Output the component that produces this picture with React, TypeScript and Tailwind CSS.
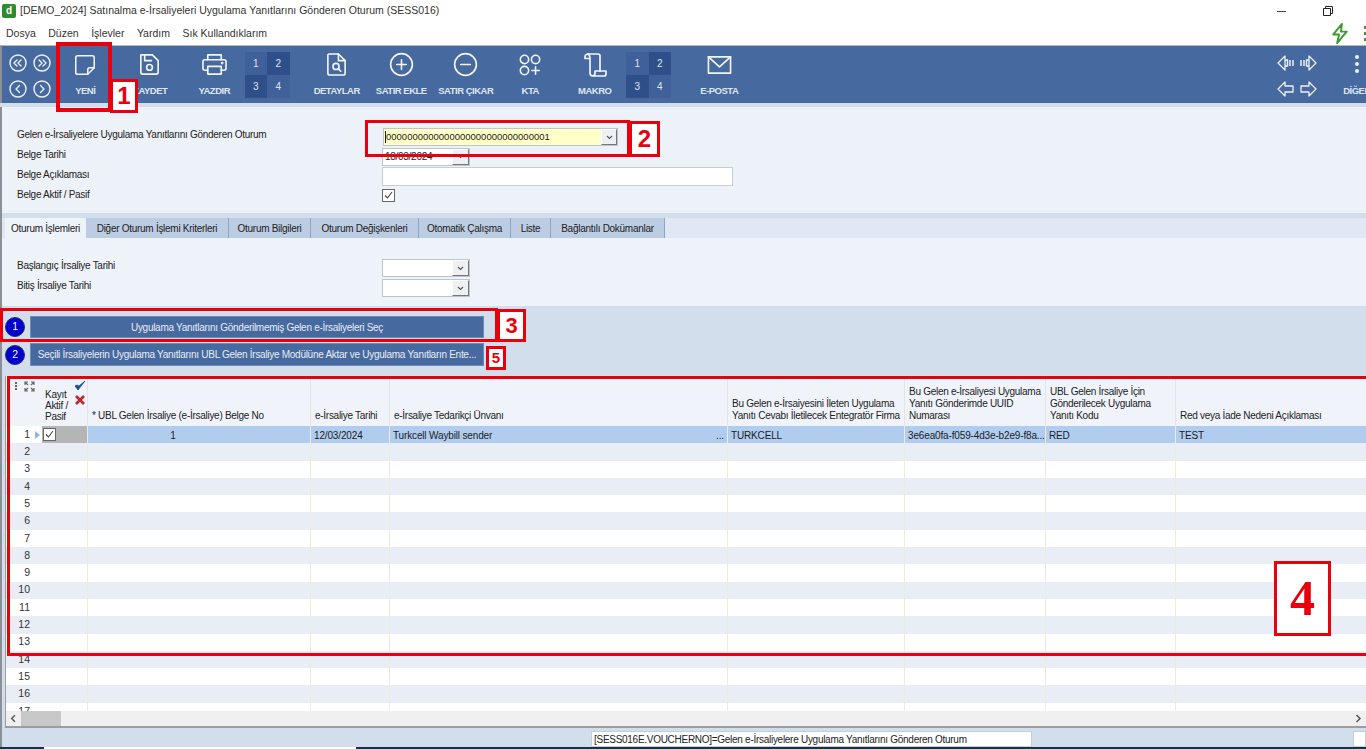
import React from "react";

const stroke = { fill: "none", stroke: "#f2f5fa", strokeWidth: 1.7, strokeLinecap: "round" as const, strokeLinejoin: "round" as const };

function NewIcon() {
  return (
    <svg width="24" height="24" viewBox="0 0 26 26" {...stroke}>
      <path d="M5 3h16a2 2 0 0 1 2 2v11l-7 7H5a2 2 0 0 1-2-2V5a2 2 0 0 1 2-2z" />
      <path d="M23 16h-5a2 2 0 0 0-2 2v5" />
    </svg>
  );
}
function SaveIcon() {
  return (
    <svg width="25" height="25" viewBox="0 0 26 26" {...stroke}>
      <path d="M4 3h12l6 6v12a2 2 0 0 1-2 2H6a2 2 0 0 1-2-2z" />
      <path d="M8 3v6h7" />
      <circle cx="13" cy="16" r="3" />
    </svg>
  );
}
function PrintIcon() {
  return (
    <svg width="27" height="25" viewBox="0 0 28 26" {...stroke}>
      <path d="M7 8V3h14v5" />
      <path d="M7 19H4a2 2 0 0 1-2-2v-7a2 2 0 0 1 2-2h20a2 2 0 0 1 2 2v7a2 2 0 0 1-2 2h-3" />
      <path d="M7 15h14v8H7z" />
      <circle cx="22" cy="11.500" r="0.6" />
    </svg>
  );
}
function DetailIcon() {
  return (
    <svg width="23" height="25" viewBox="0 0 24 26" {...stroke}>
      <path d="M4 2h10l7 7v13a2 2 0 0 1-2 2H5a2 2 0 0 1-2-2V3z" />
      <path d="M14 2v7h7" />
      <circle cx="11.500" cy="15" r="3.200" />
      <path d="M14 17.500l2.500 2.500" />
    </svg>
  );
}
function PlusIcon() {
  return (
    <svg width="25" height="25" viewBox="0 0 26 26" {...stroke}>
      <circle cx="13" cy="13" r="11.300" />
      <path d="M13 8v10M8 13h10" />
    </svg>
  );
}
function MinusIcon() {
  return (
    <svg width="25" height="25" viewBox="0 0 26 26" {...stroke}>
      <circle cx="13" cy="13" r="11.300" />
      <path d="M8 13h10" />
    </svg>
  );
}
function KtaIcon() {
  return (
    <svg width="24" height="24" viewBox="0 0 26 26" {...stroke}>
      <circle cx="7" cy="7" r="4.500" />
      <circle cx="19" cy="7" r="4.500" />
      <circle cx="7" cy="19" r="4.500" />
      <path d="M19 15v8M15 19h8" />
    </svg>
  );
}
function MacroIcon() {
  return (
    <svg width="26" height="26" viewBox="0 0 26 26" {...stroke}>
      <path d="M6 2h10a2 2 0 0 1 2 2v15" />
      <path d="M6 2a3 3 0 0 0-3 3v1.500h4.500" />
      <path d="M6 2c1.500 1 2 2 2 4v15a3 3 0 0 0 3 3h11a2 2 0 0 0 2-2v-3H13v2a3 3 0 0 1-2 3" />
    </svg>
  );
}
function MailIcon() {
  return (
    <svg width="25" height="20" viewBox="0 0 26 20" {...stroke}>
      <path d="M1.500 1.500h23v17h-23z" />
      <path d="M1.500 1.500L13 12 24.500 1.500" />
    </svg>
  );
}

function NavCircle({ dir }: { dir: "ll" | "rr" | "l" | "r" }) {
  const d = { ll: "M8 6L5 9l3 3M12 6L9 9l3 3", rr: "M6 6l3 3-3 3M10 6l3 3-3 3", l: "M10.500 5.500L7 9l3.500 3.500", r: "M7.500 5.500L11 9l-3.500 3.500" }[dir];
  return (
    <svg width="18" height="18" viewBox="0 0 18 18" fill="none" stroke="#eef2f8" strokeWidth="1.400" strokeLinecap="round" strokeLinejoin="round">
      <circle cx="9" cy="9" r="8" />
      <path d={d} />
    </svg>
  );
}

function ArrowIcon({ dir, bars }: { dir: "l" | "r"; bars?: boolean }) {
  const p = "M9 2L2 9l7 7v-4h8V6H9z";
  return (
    <svg width="20" height="18" viewBox="0 0 20 18" fill="none" stroke="#eef2f8" strokeWidth="1.300" strokeLinejoin="round" className={dir === "r" ? "-scale-x-100" : ""}>
      {bars ? <path d="M9 2L2 9l7 7z" /> : <path d={p} />}
      {bars && <path d="M9 6h2.500v6H9M14 6v6M17 6v6" strokeWidth="1.500" />}
    </svg>
  );
}

function Tool({ label, icon }: { label: string; icon: React.ReactNode }) {
  return (
    <div className="w-[64.500px] shrink-0 flex flex-col items-center">
      <div className="h-[37px] flex items-center justify-center">{icon}</div>
      <div className="mt-[2px] text-[9.500px] tracking-[-0.5px] leading-[12px] font-bold text-[#dfe6f1] whitespace-nowrap">{label}</div>
    </div>
  );
}

function NumGrid({ shift }: { shift: string }) {
  const cells = [
    { n: "1", c: "bg-[#3f6099]" },
    { n: "2", c: "bg-[#2f4f8b]" },
    { n: "3", c: "bg-[#2f4f8b]" },
    { n: "4", c: "bg-[#3f6099]" },
  ];
  return (
    <div className={`grid grid-cols-2 w-[45px] h-[46px] shrink-0 mt-[6px] ${shift}`}>
      {cells.map((x) => (
        <div key={x.n} className={`${x.c} flex items-center justify-center text-[10px] text-[#dfe6f1]`}>
          {x.n}
        </div>
      ))}
    </div>
  );
}

function Chevron() {
  return (
    <svg width="7" height="5" viewBox="0 0 7 5" fill="none" stroke="#555" strokeWidth="1.100">
      <path d="M1 1l2.500 2.500L6 1" />
    </svg>
  );
}

function DropBtn({ w = "w-[17px]" }: { w?: string }) {
  return (
    <div className={`${w} h-full shrink-0 flex items-center justify-center bg-[#eef0f4] border border-t-[#fff] border-l-[#fff] border-r-[#777] border-b-[#777]`}>
      <Chevron />
    </div>
  );
}

function Check({ size = "w-[13px] h-[13px]" }: { size?: string }) {
  return (
    <div className={`${size} bg-white border border-[#666] flex items-center justify-center`}>
      <svg width="11" height="11" viewBox="0 0 11 11" fill="none" stroke="#444" strokeWidth="1.100">
        <path d="M2 5.500l2.500 2.500L9 2" />
      </svg>
    </div>
  );
}

const cols = [
  { w: "w-[36px]" },
  { w: "w-[46px]" },
  { w: "w-[223px]" },
  { w: "w-[79px]" },
  { w: "w-[338px]" },
  { w: "w-[177px]" },
  { w: "w-[141px]" },
  { w: "w-[130px]" },
  { w: "w-[191px]" },
];

const heads = [
  "* UBL Gelen İrsaliye (e-İrsaliye) Belge No",
  "e-İrsaliye Tarihi",
  "e-İrsaliye Tedarikçi Ünvanı",
  "Bu Gelen e-İrsaiyesini İleten Uygulama\nYanıtı Cevabı İletilecek Entegratör Firma",
  "Bu Gelen e-İrsaliyesi Uygulama\nYanıtı Gönderimde UUID\nNumarası",
  "UBL Gelen İrsaliye İçin\nGönderilecek Uygulama\nYanıtı Kodu",
  "Red veya İade Nedeni Açıklaması",
];

function Row({ n }: { n: number }) {
  const sel = n === 1;
  const bg = sel ? "bg-[#b0cdf0]" : n % 2 === 0 ? "bg-[#e9eef6]" : "bg-white";
  const cell = "h-full shrink-0 border-r border-[#ecebdc] flex items-center pt-px pl-[3px] text-[10px] tracking-[-0.15px] text-[#1c1c1c] whitespace-nowrap overflow-hidden";
  const values = sel
    ? ["1", "12/03/2024", "Turkcell Waybill sender", "TURKCELL", "3e6ea0fa-f059-4d3e-b2e9-f8a...", "RED", "TEST"]
    : ["", "", "", "", "", "", ""];
  return (
    <div className="flex h-[17.300px] shrink-0">
      <div className={`${cols[0].w} ${n % 2 === 0 ? "bg-[#e9eef6]" : "bg-white"} h-full shrink-0 flex items-center relative`}>
        <span className="w-[24px] text-right text-[10.500px] tracking-normal text-[#333]">{n}</span>
        {sel && <span className="ml-[5px] w-0 h-0 border-y-[4px] border-y-transparent border-l-[5px] border-l-[#8fb4e4]" />}
      </div>
      <div className={`${cols[1].w} ${sel ? "bg-[#b5b5b5]" : bg} h-full shrink-0 border-r border-[#ecebdc] pl-[1px] flex items-center`}>
        {sel && <Check />}
      </div>
      {values.map((v, i) => (
        <div key={i} className={`${cols[i + 2].w} ${bg} ${cell} ${i === 0 ? "justify-center pr-[55px]" : "pr-[3px]"} ${i === 2 ? "justify-between" : ""}`}>
          <span>{v}</span>
          {sel && i === 2 && <span>...</span>}
        </div>
      ))}
      <div className={`flex-1 ${bg}`} />
    </div>
  );
}

function Badge({ n, className }: { n: string; className: string }) {
  return (
    <div className={`absolute bg-white border-[3px] border-[#e8000d] text-[#e8000d] font-bold tracking-normal flex items-center justify-center ${className}`}>
      {n}
    </div>
  );
}

export default function App() {
  const font = { fontFamily: '"Liberation Sans", Arial, sans-serif' };
  return (
    <div className="relative w-[1366px] h-[749px] overflow-hidden bg-[#d3deed] flex flex-col text-[10px] tracking-[-0.28px] text-[#222]" style={font}>
      {/* title bar */}
      <div className="h-[22px] shrink-0 bg-white flex items-center pl-[2px] pr-0">
        <div className="w-[14px] h-[14px] rounded-[2px] bg-[#2e8b2e] text-white text-[10px] font-bold flex items-center justify-center leading-none">d</div>
        <span className="ml-[4px] text-[10.500px] tracking-normal text-[#333] whitespace-nowrap">[DEMO_2024] Satınalma e-İrsaliyeleri Uygulama Yanıtlarını Gönderen Oturum (SESS016)</span>
        <div className="ml-auto flex items-center">
          <div className="w-[9px] h-px bg-[#444] mr-[37px]" />
          <svg width="10" height="10" viewBox="0 0 10 10" fill="none" stroke="#222" strokeWidth="1" className="mr-[33px]">
            <path d="M0.500 2.500h7v7h-7zM2.500 2.500v-2h7v7h-2" />
          </svg>
        </div>
      </div>
      {/* menu */}
      <div className="h-[23px] shrink-0 bg-white flex items-center pl-[6px] gap-[12.500px] text-[10.500px] tracking-normal text-[#333] relative">
        <span>Dosya</span>
        <span>Düzen</span>
        <span>İşlevler</span>
        <span>Yardım</span>
        <span>Sık Kullandıklarım</span>
        <div className="ml-auto flex items-center pr-0">
          <svg width="20" height="23" viewBox="0 0 20 24" fill="none" stroke="#3f9a2d" strokeWidth="2" strokeLinejoin="round" className="mr-[14px]">
            <path d="M12 2L3 13h6l-2 9 10-12h-6z" />
          </svg>
          <div className="w-[2px] flex flex-col gap-[3px]">
            <span className="w-[3px] h-[3px] bg-[#3f9a2d]" />
            <span className="w-[3px] h-[3px] bg-[#3f9a2d]" />
            <span className="w-[3px] h-[3px] bg-[#3f9a2d]" />
          </div>
        </div>
      </div>
      {/* toolbar */}
      <div className="h-[58px] shrink-0 bg-[#46699f] border-t border-[#b9b9b9] border-l-2 border-l-[#8b8f96] flex items-start pl-[6px] overflow-hidden">
        <div className="w-[45px] shrink-0 grid grid-cols-2 gap-x-[3px] gap-y-[8px] pt-[8px] pl-[1px]">
          <NavCircle dir="ll" />
          <NavCircle dir="rr" />
          <NavCircle dir="l" />
          <NavCircle dir="r" />
        </div>
        <Tool label="YENİ" icon={<NewIcon />} />
        <Tool label="KAYDET" icon={<SaveIcon />} />
        <Tool label="YAZDIR" icon={<PrintIcon />} />
        <NumGrid shift="ml-[-2px]" />
        <div className="w-[15px] shrink-0" />
        <Tool label="DETAYLAR" icon={<DetailIcon />} />
        <Tool label="SATIR EKLE" icon={<PlusIcon />} />
        <Tool label="SATIR ÇIKAR" icon={<MinusIcon />} />
        <Tool label="KTA" icon={<KtaIcon />} />
        <Tool label="MAKRO" icon={<MacroIcon />} />
        <NumGrid shift="ml-[-1px]" />
        <div className="w-[16px] shrink-0" />
        <Tool label="E-POSTA" icon={<MailIcon />} />
        <div className="ml-auto flex items-start">
          <div className="grid grid-cols-2 gap-x-[2px] gap-y-[8px] pt-[8px]">
            <ArrowIcon dir="l" bars />
            <ArrowIcon dir="r" bars />
            <ArrowIcon dir="l" />
            <ArrowIcon dir="r" />
          </div>
          <div className="w-[28px] ml-[25px] mr-[-5px] shrink-0 flex flex-col items-center">
            <div className="h-[35px] flex flex-col items-center justify-center gap-[3px]">
              <span className="w-[4px] h-[4px] rounded-full bg-[#eef2f8]" />
              <span className="w-[4px] h-[4px] rounded-full bg-[#eef2f8]" />
              <span className="w-[4px] h-[4px] rounded-full bg-[#eef2f8]" />
            </div>
            <div className="mt-[4px] text-[9.500px] tracking-[-0.5px] leading-[12px] font-bold text-[#dfe6f1]">DİĞER</div>
          </div>
        </div>
      </div>
      <div className="h-[4px] shrink-0 bg-[#d3deed]" />
      {/* content column */}
      <div className="flex-1 min-h-0 flex flex-col border-l-2 border-[#8b8f96]">
        {/* header form */}
        <div className="h-[106px] shrink-0 bg-[#edf1f8] pt-[17px] pl-[15px] flex flex-col">
          <div className="flex items-center h-[20px]">
            <span className="w-[365px] shrink-0 whitespace-nowrap">Gelen e-İrsaliyelere Uygulama Yanıtlarını Gönderen Oturum</span>
            <div className="w-[235px] h-[18px] mt-[6px] bg-[#ffffc8] border border-[#bfc5cf] flex items-center pl-[1px] ml-[1px] justify-between">
              <span className="text-[9.500px] tracking-normal text-[#222] border-l border-[#222] leading-[12px]">0000000000000000000000000000001</span>
              <DropBtn w="w-[16px]" />
            </div>
          </div>
          <div className="flex items-center h-[20px]">
            <span className="w-[365px] shrink-0">Belge Tarihi</span>
            <div className="w-[88px] h-[18px] mt-[5px] bg-white border border-[#bfc5cf] flex items-center pl-[2px] justify-between">
              <span>18/03/2024</span>
              <DropBtn />
            </div>
          </div>
          <div className="flex items-center h-[20px]">
            <span className="w-[365px] shrink-0">Belge Açıklaması</span>
            <div className="w-[351px] h-[19px] mt-[5px] bg-white border border-[#c8ccd4]" />
          </div>
          <div className="flex items-center h-[20px]">
            <span className="w-[365px] shrink-0">Belge Aktif / Pasif</span>
            <div className="mt-[3px]"><Check /></div>
          </div>
        </div>
        <div className="h-[5px] shrink-0 bg-[#d3deed]" />
        {/* tabs */}
        <div className="h-[20px] shrink-0 pl-[3px] flex bg-[#e1e8f3] items-stretch whitespace-nowrap">
          <div className="w-[81px] bg-[#eef2f9] flex items-center justify-center">Oturum İşlemleri</div>
          {[
            ["w-[143px]", "Diğer Oturum İşlemi Kriterleri"],
            ["w-[82px]", "Oturum Bilgileri"],
            ["w-[108px]", "Oturum Değişkenleri"],
            ["w-[92px]", "Otomatik Çalışma"],
            ["w-[40px]", "Liste"],
            ["w-[114px]", "Bağlantılı Dokümanlar"],
          ].map(([w, t]) => (
            <div key={t} className={`${w} bg-[#bccde3] border-r border-[#8ea6c5] flex items-center justify-center`}>
              {t}
            </div>
          ))}
        </div>
        {/* tab body */}
        <div className="h-[68px] shrink-0 bg-[#eef2f9] pt-[17px] pl-[15px] flex flex-col">
          <div className="flex items-center h-[20px]">
            <span className="w-[365px] shrink-0">Başlangıç İrsaliye Tarihi</span>
            <div className="w-[88px] h-[18px] mt-[6px] bg-white border border-[#bfc5cf] flex justify-end"><DropBtn /></div>
          </div>
          <div className="flex items-center h-[20px]">
            <span className="w-[365px] shrink-0">Bitiş İrsaliye Tarihi</span>
            <div className="w-[88px] h-[18px] mt-[6px] bg-white border border-[#bfc5cf] flex justify-end"><DropBtn /></div>
          </div>
        </div>
        {/* action buttons */}
        <div className="h-[70px] shrink-0 pt-[10px] pl-[3px] flex flex-col gap-[5px]">
          {[
            ["1", "Uygulama Yanıtlarını Gönderilmemiş Gelen e-İrsaliyeleri Seç", "h-[22px]"],
            ["2", "Seçili İrsaliyelerin Uygulama Yanıtlarını UBL Gelen İrsaliye Modülüne Aktar ve Uygulama Yanıtların Ente...", "h-[23px]"],
          ].map(([n, t, h]) => (
            <div key={n} className={`flex items-center ${h}`}>
              <div className="w-[20px] h-[20px] rounded-full bg-[#0000cc] border border-[#2b2b7a] text-white text-[10.500px] flex items-center justify-center shrink-0">{n}</div>
              <div className="ml-[5px] w-[454px] h-full bg-[#46699f] text-[#e8edf5] flex items-center justify-center whitespace-nowrap overflow-hidden border border-[#6f8cb8]">{t}</div>
            </div>
          ))}
        </div>
        {/* data grid */}
        <div className="ml-[3px] h-[352px] shrink-0 bg-white border-b-2 border-l border-[#9a9da3] flex flex-col overflow-hidden">
          <div className="h-[48px] shrink-0 flex bg-[#f0f4fa] mt-[2px]">
            <div className={`${cols[0].w} shrink-0 flex items-start gap-[7px] pl-[9px] pt-[3px]`}>
              <div className="flex flex-col gap-[1px] mt-[1px]">
                <span className="w-[2px] h-[2px] bg-[#666]" />
                <span className="w-[2px] h-[2px] bg-[#666]" />
                <span className="w-[2px] h-[2px] bg-[#666]" />
              </div>
              <svg width="11" height="11" viewBox="0 0 11 11" fill="none" stroke="#666" strokeWidth="1.200">
                <path d="M1 4V1h3M7 1h3v3M10 7v3H7M4 10H1V7M1 1l3 3M10 1L7 4M10 10L7 7M1 10l3-3" />
              </svg>
            </div>
            <div className={`${cols[1].w} shrink-0 relative border-r border-[#e3e5e3] flex items-end pl-[3px] pb-[4px] leading-[11px]`}>
              <span className="w-[30px]">Kayıt Aktif / Pasif</span>
              <svg width="12" height="28" viewBox="0 0 12 28" className="absolute right-[1px] top-[1px]">
                <path d="M1 7l3 4 7-9-6 5-2-1z" fill="#1f4f95" stroke="#1f4f95" strokeWidth="0.800" />
                <path d="M2 17l8 8M10 17l-8 8" stroke="#c0272d" strokeWidth="2.600" />
              </svg>
            </div>
            {heads.map((h, i) => (
              <div key={h} className={`${cols[i + 2].w} shrink-0 border-r border-[#e3e5e3] flex items-end px-[4px] pb-[4px] leading-[12px] whitespace-pre`}>
                <span>{h}</span>
              </div>
            ))}
            <div className="flex-1" />
          </div>
          <div className="flex-1 min-h-0 flex flex-col overflow-hidden">
            {Array.from({ length: 17 }, (_, i) => (
              <Row key={i} n={i + 1} />
            ))}
          </div>
          {/* scrollbar */}
          <div className="h-[15px] shrink-0 bg-[#f0f0f0] flex items-center">
            <svg width="15" height="15" viewBox="0 0 16 15" fill="none" stroke="#555" strokeWidth="1.500"><path d="M9.500 4L6 7.500 9.500 11" /></svg>
            <div className="w-[40px] h-full bg-[#c8c8c8]" />
            <svg width="16" height="15" viewBox="0 0 16 15" fill="none" stroke="#555" strokeWidth="1.500" className="ml-auto"><path d="M6.500 4L10 7.500 6.500 11" /></svg>
          </div>
        </div>
        {/* status */}
        <div className="flex-1 min-h-0 flex items-start pt-[3px] pl-[589px]">
          <div className="w-[441px] h-[16px] bg-white border border-[#c8ccd4] flex items-center pl-[2px] whitespace-nowrap overflow-hidden">[SESS016E.VOUCHERNO]=Gelen e-İrsaliyelere Uygulama Yanıtlarını Gönderen Oturum</div>
          <div className="ml-auto w-[13px] h-[16px] bg-white border border-[#c8ccd4]" />
        </div>
      </div>
      <div className="h-[2px] shrink-0 bg-[#1a3145] flex pl-[44px]">
        <div className="w-[312px] bg-white" />
      </div>

      {/* red annotations over the screenshot */}
      <div className="absolute left-[56px] top-[42px] w-[56px] h-[70px] border-[4px] border-[#e8000d]" />
      <Badge n="1" className="left-[110px] top-[79px] w-[28px] h-[34px] text-[24px]" />
      <div className="absolute left-[365px] top-[120px] w-[265px] h-[37px] border-[3px] border-[#e8000d]" />
      <Badge n="2" className="left-[629px] top-[121px] w-[31px] h-[36px] text-[24px]" />
      <div className="absolute left-0 top-[308px] w-[498px] h-[34px] border-[3px] border-[#e8000d]" />
      <Badge n="3" className="left-[497px] top-[309px] w-[29px] h-[33px] text-[22px]" />
      <Badge n="5" className="left-[486px] top-[346px] w-[20px] h-[24px] text-[15px]" />
      <div className="absolute left-[7px] top-[376px] w-[1365px] h-[280px] border-[3px] border-[#e8000d]" />
      <div className="absolute left-[1274px] top-[561px] w-[57px] h-[75px] bg-white border-[3px] border-[#e8000d] text-[#e8000d] font-bold tracking-normal text-[50px] flex items-center justify-center" style={{ fontFamily: '"Liberation Serif", serif' }}>4</div>
    </div>
  );
}
